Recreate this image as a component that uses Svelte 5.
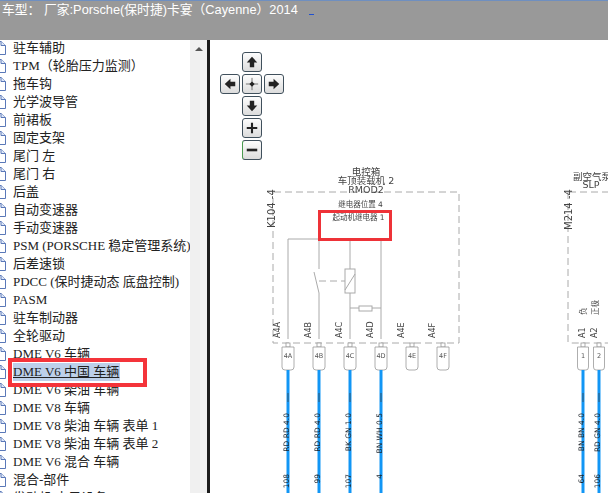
<script>
  const parts = [
    ["驻车辅助"], ["TPM（轮胎压力监测）"], ["拖车钩"], ["光学波导管"], ["前裙板"], ["固定支架"],
    ["尾门 左"], ["尾门 右"], ["后盖"], ["自动变速器"], ["手动变速器"],
    ["PSM (PORSCHE 稳定管理系统)"], ["后差速锁"], ["PDCC (保时捷动态 底盘控制)"], ["PASM"],
    ["驻车制动器"], ["全轮驱动"], ["DME V6 车辆"], ["DME V6 中国 车辆", true], ["DME V6 柴油 车辆"],
    ["DME V8 车辆"], ["DME V8 柴油 车辆 表单 1"], ["DME V8 柴油 车辆 表单 2"], ["DME V6 混合 车辆"],
    ["混合-部件"], ["发动机 电子设备"]
  ];

  // lx: baseline of the rotated pin label, hw: half width of the connector
  const pins = [
    { x: 288, lx: 280, hw: 6, label: "A4A", pin: "4A", wire: "RD RD 4.0", num: "108" },
    { x: 319, lx: 311, hw: 6, label: "A4B", pin: "4B", wire: "RD RD 4.0", num: "99" },
    { x: 350, lx: 342, hw: 6, label: "A4C", pin: "4C", wire: "BK GN 1.0", num: "107" },
    { x: 381, lx: 373, hw: 6, label: "A4D", pin: "4D", wire: "BN WH 0.5", num: "4" },
    { x: 412, lx: 404, hw: 6, label: "A4E", pin: "4E" },
    { x: 443, lx: 435, hw: 6, label: "A4F", pin: "4F" },
    { x: 583, lx: 585, hw: 5.5, label: "A1", pin: "1", wire: "BN BN 4.0", num: "64", fn: "负" },
    { x: 599, lx: 597, hw: 5.5, label: "A2", pin: "2", wire: "RD GN 4.0", num: "106", fn: "正极" }
  ];
</script>

<div class="page">
  <header class="top">
    <span class="model">车型： 厂家:Porsche(保时捷)卡宴（Cayenne）2014</span>
    <span class="dot"></span>
  </header>
  <div class="body">
    <aside class="side">
      <ul class="tree">
        {#each parts as [name, sel]}
          <li>
            <svg class="doc" viewBox="0 0 10 16" width="10" height="16">
              <path d="M-6 1.500H1L5.500 5.500V14.500H-6Z" fill="#fff" stroke="#5a78b8" />
              <path d="M1 1.500V5.500H5.500" fill="#dfe8f8" stroke="#5a78b8" />
            </svg>
            <span class="name" class:sel>{name}</span>
          </li>
        {/each}
      </ul>
      <div class="scroll"><span class="up"></span></div>
      <div class="mark"></div>
    </aside>
    <main class="view">
      <div class="nav">
        <button class="b up-b"><svg viewBox="0 0 16 16"><path d="M8 2L14 8.500H10.500V14H5.500V8.500H2Z" /></svg></button>
        <button class="b left-b"><svg viewBox="0 0 16 16"><path d="M2 8L8.500 2V5.500H14V10.500H8.500V14Z" /></svg></button>
        <button class="b mid-b"><svg viewBox="0 0 16 16"><path d="M8 1V15M1 8H15" stroke="#666" fill="none" /><path d="M8 5L11 8L8 11L5 8Z" /></svg></button>
        <button class="b right-b"><svg viewBox="0 0 16 16"><path d="M14 8L7.500 2V5.500H2V10.500H7.500V14Z" /></svg></button>
        <button class="b down-b"><svg viewBox="0 0 16 16"><path d="M8 14L2 7.500H5.500V2H10.500V7.500H14Z" /></svg></button>
        <button class="b plus-b"><svg viewBox="0 0 16 16"><path d="M2 6.800H6.800V2H9.200V6.800H14V9.200H9.200V14H6.800V9.200H2Z" /></svg></button>
        <button class="b minus-b"><svg viewBox="0 0 16 16"><path d="M2 6.500H14V9.500H2Z" /></svg></button>
      </div>

      <svg class="diagram" viewBox="210 40 398 453" width="398" height="453">
        <g class="frame">
          <path d="M274 192H459V343H273V192" />
          <path d="M569 192H608M568 192V342Q568 343 570 343H608" />
        </g>
        <g class="txt">
          <text x="366" y="175">电控箱</text>
          <text x="366" y="184">车顶装载机 2</text>
          <text x="366" y="193">RMOD2</text>
          <text x="360.500" y="207" class="small">继电器位置 4</text>
          <text x="358.500" y="220" class="small">起动机继电器 1</text>
          <text x="573" y="180" class="start">副空气泵</text>
          <text x="591" y="188">SLP</text>
        </g>
        <text class="rot" transform="translate(275 228) rotate(-90)" font-size="10">K104 -4</text>
        <text class="rot" transform="translate(572 230) rotate(-90)" font-size="10">M214 -4</text>

        <g class="relay">
          <path d="M288 339V239H381V339M319 239V269M350 239V269M350 293V339M319 293L314 272M319 293V339" />
          <path d="M319 281H345" stroke-dasharray="7 4" />
          <rect x="345" y="269" width="10" height="24" />
          <path d="M345 290L355 274" />
          <path d="M350 308H381" />
          <rect x="359" y="306" width="13" height="5" />
        </g>

        {#each pins as p}
          <text class="rot" transform="translate({p.lx} 338) rotate(-90)" font-size="8">{p.label}</text>
          {#if p.fn}
            <text class="rot" transform="translate({p.lx + 1} 315) rotate(-90)" font-size="7.500">{p.fn}</text>
          {/if}
          <g class="pin">
            <rect x={p.x - 2} y="343" width="4" height="4" />
            <path d="M{p.x - p.hw} 347H{p.x + p.hw}V367Q{p.x + p.hw} 370 {p.x + 3} 370H{p.x - 3}Q{p.x - p.hw} 370 {p.x - p.hw} 367Z" />
          </g>
          <text class="pintext" x={p.x} y="358">{p.pin}</text>
          {#if p.wire}
            <path class="wire" d="M{p.x} 370V493" />
            <path class="tick" d="M{p.x} 393V402" />
            <text class="rot end dark" transform="translate({p.x + 1} 413) rotate(-90)" font-size="7.500">{p.wire}</text>
            <text class="rot end dark" transform="translate({p.x + 1} 474) rotate(-90)" font-size="7.500">{p.num}</text>
          {/if}
        {/each}
      </svg>
      <div class="hl"></div>
    </main>
  </div>
</div>

<style>
  :global(body) {
    margin: 0;
    background: #fff;
  }
  .page {
    width: 608px;
    height: 493px;
    overflow: hidden;
    display: flex;
    flex-direction: column;
    font-family: "Liberation Serif", "Noto Sans CJK SC", serif;
  }
  .top {
    height: 40px;
    flex: none;
    box-sizing: border-box;
    background: #999;
    border-top: 1px solid #6f8fc0;
    padding: 0 0 0 2px;
    color: #fff;
    font: 12.800px/17px "Liberation Sans", "Noto Sans CJK SC", sans-serif;
    display: flex;
    gap: 11px;
  }
  .model {
    white-space: nowrap;
  }
  .dot {
    width: 5px;
    height: 1px;
    margin-top: 13px;
    background: #2050d0;
  }
  .body {
    flex: 1;
    display: flex;
    min-height: 0;
  }
  .side {
    position: relative;
    width: 207px;
    flex: none;
    display: flex;
    overflow: hidden;
    border-right: 3px solid #1c1c1c;
  }
  .tree {
    list-style: none;
    margin: -1px 0 0;
    padding: 0;
    width: 190px;
    flex: none;
    overflow: hidden;
  }
  li {
    height: 18px;
    display: flex;
    align-items: center;
    white-space: nowrap;
    font-size: 13px;
    color: #222;
  }
  .doc {
    flex: none;
    width: 10px;
    margin-right: 3px;
  }
  .name {
    padding: 0 1px 0 0;
    line-height: 18px;
  }
  .sel {
    background: #bdd0ea;
    text-decoration: underline;
  }
  .scroll {
    flex: 1;
    background: #f0f0f0;
    position: relative;
  }
  .up {
    position: absolute;
    left: 5px;
    top: 7px;
    border: 4px solid transparent;
    border-top: 0;
    border-bottom: 4px solid #555;
  }
  .mark {
    position: absolute;
    left: 8px;
    top: 318px;
    width: 131px;
    height: 21px;
    border: 4px solid #f4343a;
  }
  .view {
    flex: 1;
    position: relative;
    overflow: hidden;
    min-width: 0;
  }
  .diagram {
    display: block;
    filter: blur(0.25px);
  }
  .nav {
    position: absolute;
    left: 10px;
    top: 12px;
    display: grid;
    grid-template-columns: repeat(3, 20px);
    grid-auto-rows: 20px;
    gap: 2px;
  }
  .b {
    padding: 0;
    width: 20px;
    height: 20px;
    box-sizing: border-box;
    background: linear-gradient(#fdfdfd, #dcdcdc);
    border: 1px solid #40505c;
    border-radius: 3px;
    display: flex;
    align-items: center;
    justify-content: center;
  }
  .b svg {
    width: 14px;
    height: 14px;
    fill: #222;
  }
  .up-b { grid-area: 1 / 2; }
  .left-b { grid-area: 2 / 1; }
  .mid-b { grid-area: 2 / 2; }
  .right-b { grid-area: 2 / 3; }
  .down-b { grid-area: 3 / 2; }
  .plus-b { grid-area: 4 / 2; }
  .minus-b { grid-area: 5 / 2; border-left-color: #4a9a50; }
  .frame path {
    fill: none;
    stroke: #aaa;
    stroke-width: 1;
    stroke-dasharray: 7 4;
  }
  .txt text {
    text-anchor: middle;
    font-family: "DejaVu Sans", "Noto Sans CJK SC", sans-serif;
    font-size: 9.500px;
    fill: #444;
  }
  .txt text.start {
    text-anchor: start;
  }
  .txt text.small {
    font-size: 7.500px;
  }
  .rot {
    font-family: "DejaVu Sans", "Noto Sans CJK SC", sans-serif;
    fill: #444;
  }
  .rot.dark {
    fill: #1c2228;
  }
  .end {
    text-anchor: end;
  }
  .relay path,
  .relay rect {
    fill: none;
    stroke: #aaa;
    stroke-width: 1;
  }
  .relay rect {
    fill: #fff;
  }
  .pin rect,
  .pin path {
    fill: #fff;
    stroke: #999;
    stroke-width: 0.800;
  }
  .pintext {
    text-anchor: middle;
    font: 6.500px "DejaVu Sans", sans-serif;
    fill: #555;
  }
  .wire {
    stroke: #1296f5;
    stroke-width: 3;
    fill: none;
  }
  .tick {
    stroke: #33566f;
    stroke-width: 1;
  }
  .hl {
    position: absolute;
    left: 108px;
    top: 170px;
    width: 68px;
    height: 25px;
    border: 3px solid #ee3238;
  }
</style>
